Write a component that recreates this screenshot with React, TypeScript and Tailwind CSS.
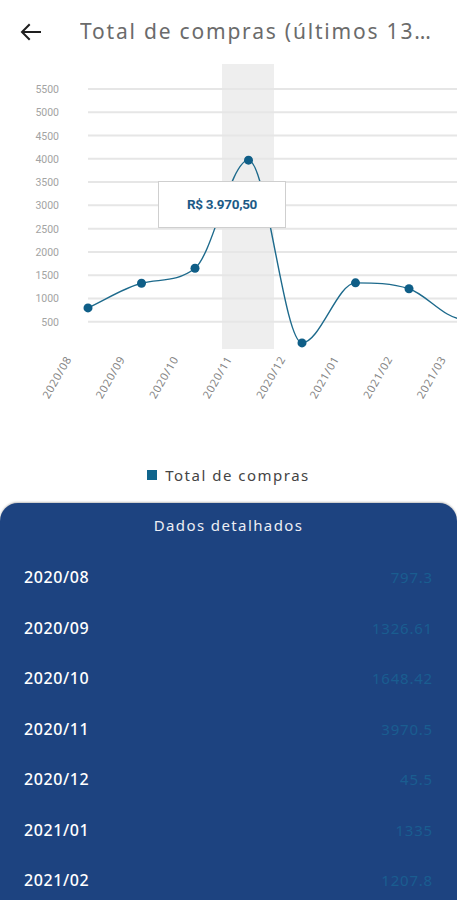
import React from "react";

type Pt = { x: number; y: number };

const months = [
  { label: "2020/08", value: 797.3, text: "797.3" },
  { label: "2020/09", value: 1326.61, text: "1326.61" },
  { label: "2020/10", value: 1648.42, text: "1648.42" },
  { label: "2020/11", value: 3970.5, text: "3970.5" },
  { label: "2020/12", value: 45.5, text: "45.5" },
  { label: "2021/01", value: 1335, text: "1335" },
  { label: "2021/02", value: 1207.8, text: "1207.8" },
  { label: "2021/03", value: 560, text: "560" },
  { label: "2021/04", value: 900, text: "900" },
];

const ticks = [5500, 5000, 4500, 4000, 3500, 3000, 2500, 2000, 1500, 1000, 500];

const xAt = (i: number) => 88 + i * 53.5;
const yAt = (v: number) => 345 - v * 0.04655;

// monotone cubic, like chart.js cubicInterpolationMode: "monotone"
function buildPath(pts: Pt[]) {
  const n = pts.length;
  const delta: number[] = [];
  for (let i = 0; i < n - 1; i++) {
    delta.push((pts[i + 1].y - pts[i].y) / (pts[i + 1].x - pts[i].x));
  }
  const m: number[] = pts.map((_, i) => {
    if (i === 0) return delta[0];
    if (i === n - 1) return delta[n - 2];
    if (Math.sign(delta[i - 1]) !== Math.sign(delta[i])) return 0;
    return (delta[i - 1] + delta[i]) / 2;
  });
  for (let i = 0; i < n - 1; i++) {
    if (delta[i] === 0) {
      m[i] = 0;
      m[i + 1] = 0;
      continue;
    }
    const a = m[i] / delta[i];
    const b = m[i + 1] / delta[i];
    const s = a * a + b * b;
    if (s > 9) {
      const tau = 3 / Math.sqrt(s);
      m[i] = tau * a * delta[i];
      m[i + 1] = tau * b * delta[i];
    }
  }
  let d = `M${pts[0].x} ${pts[0].y}`;
  for (let i = 0; i < n - 1; i++) {
    const dx = (pts[i + 1].x - pts[i].x) / 3;
    d += ` C${pts[i].x + dx} ${pts[i].y + m[i] * dx} ${pts[i + 1].x - dx} ${
      pts[i + 1].y - m[i + 1] * dx
    } ${pts[i + 1].x} ${pts[i + 1].y}`;
  }
  return d;
}

const Chart = () => {
  const pts = months.map((m, i) => ({ x: xAt(i), y: yAt(m.value) }));
  return (
    <div className="relative h-[380px] w-full shrink-0">
      <svg width="457" height="380" viewBox="0 64 457 380" className="block">
        {/* highlighted month */}
        <rect x="222" y="64" width="52" height="285" fill="#eeeeee" />
        {/* grid + y axis */}
        {ticks.map((t) => (
          <g key={t}>
            <line x1="88" x2="457" y1={yAt(t)} y2={yAt(t)} stroke="#e6e6e6" strokeWidth="2" />
            <text
              x="59"
              y={yAt(t) + 4}
              textAnchor="end"
              fontSize="10.5"
              fill="#a3a3a3"
              fontFamily="Roboto, sans-serif"
            >
              {t}
            </text>
          </g>
        ))}
        <path d={buildPath(pts)} fill="none" stroke="#1d6a8c" strokeWidth="1.4" />
        {pts.slice(0, 7).map((p, i) => (
          <circle key={i} cx={p.x} cy={p.y} r="4.5" fill="#0f5e87" />
        ))}
        {/* x axis labels */}
        {months.slice(0, 8).map((m, i) => (
          <text
            key={m.label}
            x={xAt(i) - 16}
            y={359}
            textAnchor="end"
            fontSize="11"
            letterSpacing="0.7"
            fill="#858585"
            fontFamily="'Noto Sans', sans-serif"
            transform={`rotate(-60 ${xAt(i) - 16} 359)`}
          >
            {m.label}
          </text>
        ))}
      </svg>
      {/* tooltip */}
      <div className="absolute left-[158px] top-[117px] flex h-[47px] w-[128px] items-center justify-center border border-[#cfcfcf] bg-white font-['Roboto',sans-serif] text-[13.5px] font-bold tracking-[-0.3px] text-[#1c5a86]">
        R$ 3.970,50
      </div>
    </div>
  );
};

export default function App() {
  return (
    <div className="flex h-[900px] w-full flex-col overflow-hidden bg-white font-['Noto_Sans',sans-serif]">
      {/* header */}
      <div className="flex h-16 shrink-0 items-center">
        <svg width="24" height="24" viewBox="0 0 24 24" className="ml-[19px] shrink-0">
          <path d="M21 12H3.5M10 5l-7 7 7 7" fill="none" stroke="#1f1f1f" strokeWidth="2" strokeLinecap="square" />
        </svg>
        <div className="ml-[37px] w-[355px] truncate text-[21px] tracking-[1.8px] text-[#6b6b6b]">
          Total de compras (últimos 13 meses)
        </div>
      </div>

      <Chart />

      {/* legend */}
      <div className="mt-[21px] flex h-5 shrink-0 items-center justify-center gap-[8px]">
        <span className="h-[10px] w-[10px] bg-[#10658c]" />
        <span className="text-[15px] tracking-[1.5px] text-[#444444]">Total de compras</span>
      </div>

      {/* detail panel */}
      <div className="mt-[18px] flex-1 shrink-0 rounded-t-[18px] bg-[#1d4380] px-6 pt-[11px] shadow-[0_-1px_2px_rgba(0,0,0,0.25)]">
        <div className="h-[22px] text-center text-[15px] leading-[22px] tracking-[1.4px] text-[#eceef4]">
          Dados detalhados
        </div>
        <div className="mt-4 flex flex-col">
          {months.slice(0, 7).map((m) => (
            <div key={m.label} className="flex h-[50.5px] shrink-0 items-center justify-between">
              <span className="text-[16px] font-medium tracking-[0.6px] text-white">{m.label}</span>
              <span className="text-[15px] tracking-[0.8px] text-[#1a5d90]">{m.text}</span>
            </div>
          ))}
        </div>
      </div>
    </div>
  );
}
